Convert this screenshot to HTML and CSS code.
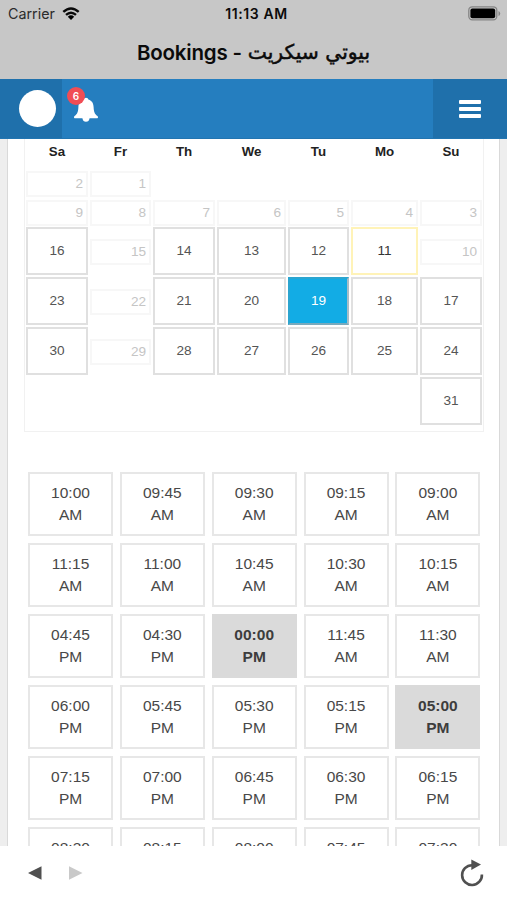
FILE: index.html
```html
<!DOCTYPE html>
<html lang="en">
<head>
<meta charset="utf-8">
<title>Bookings</title>
<link rel="stylesheet" href="styles.css">
</head>
<body>
<div class="app">
  <header class="top">
    <div class="status">
      <span class="carrier">Carrier
        <svg width="18" height="14" viewBox="0 0 18 14"><path d="M1.3 4.9Q9-2 16.7 4.9M4 7.9Q9 3.5 14 7.9" fill="none" stroke="#090909" stroke-width="2.4"/><path d="M5.8 9.7Q9 7 12.2 9.7L9 13Z"/></svg>
      </span>
      <span class="clock">11:13 AM</span>
      <svg class="battery" width="33" height="15" viewBox="0 0 33 15"><rect x=".8" y=".8" width="28" height="13" rx="3.5" fill="none" stroke="#858585" stroke-width="1.3"/><rect x="2.4" y="2.4" width="24.8" height="9.8" rx="2"/><path d="M30.5 5v5q1.7-.5 1.7-2.5T30.5 5" fill="#858585"/></svg>
    </div>
    <h1 class="title"><span>Bookings -</span><span class="salon" lang="ar" dir="rtl">بيوتي سيكريت</span></h1>
  </header>
  <nav class="bar">
    <div class="profile"><span class="avatar"></span></div>
    <div class="alerts">
      <svg width="24" height="26" viewBox="0 0 24 26"><path d="M9.6 2.5Q9.8.7 12 .7t2.4 1.8c3.7 1.1 5 3.9 5.2 7.4.2 4.4.8 6.9 3.8 9.1.9.8.8 2.2-.5 2.2h-7.3q-.6 3.5-3.6 3.5T8.4 21.2H1.1C-.2 21.2-.3 19.8.6 19c3-2.2 3.6-4.7 3.8-9.1.2-3.5 1.5-6.3 5.2-7.4Z" fill="#fff"/></svg>
      <span class="badge">6</span>
    </div>
    <div class="menu"><i></i><i></i><i></i></div>
  </nav>
  <main class="view">
    <div class="card">
      <section class="calendar">
        <b>Sa</b><b>Fr</b><b>Th</b><b>We</b><b>Tu</b><b>Mo</b><b>Su</b>
        <span class="off">2</span><span class="off">1</span><i></i><i></i><i></i><i></i><i></i>
        <span class="off">9</span><span class="off">8</span><span class="off">7</span><span class="off">6</span><span class="off">5</span><span class="off">4</span><span class="off">3</span>
        <span class="day">16</span><span class="off">15</span><span class="day">14</span><span class="day">13</span><span class="day">12</span><span class="day today">11</span><span class="off">10</span>
        <span class="day">23</span><span class="off">22</span><span class="day">21</span><span class="day">20</span><span class="day picked">19</span><span class="day">18</span><span class="day">17</span>
        <span class="day">30</span><span class="off">29</span><span class="day">28</span><span class="day">27</span><span class="day">26</span><span class="day">25</span><span class="day">24</span>
        <i></i><i></i><i></i><i></i><i></i><i></i><span class="day">31</span>
      </section>
      <section class="slots">
        <div>10:00<br>AM</div><div>09:45<br>AM</div><div>09:30<br>AM</div><div>09:15<br>AM</div><div>09:00<br>AM</div>
        <div>11:15<br>AM</div><div>11:00<br>AM</div><div>10:45<br>AM</div><div>10:30<br>AM</div><div>10:15<br>AM</div>
        <div>04:45<br>PM</div><div>04:30<br>PM</div><div class="taken">00:00<br>PM</div><div>11:45<br>AM</div><div>11:30<br>AM</div>
        <div>06:00<br>PM</div><div>05:45<br>PM</div><div>05:30<br>PM</div><div>05:15<br>PM</div><div class="taken">05:00<br>PM</div>
        <div>07:15<br>PM</div><div>07:00<br>PM</div><div>06:45<br>PM</div><div>06:30<br>PM</div><div>06:15<br>PM</div>
        <div>08:30</div><div>08:15</div><div>08:00</div><div>07:45</div><div>07:30</div>
      </section>
    </div>
  </main>
  <footer class="tools">
    <svg width="14" height="14" viewBox="0 0 14 14"><path d="M0 7 13.5.3v13.4Z" fill="#505050"/></svg>
    <svg class="next" width="14" height="14" viewBox="0 0 14 14"><path d="M13.5 7 0 .3v13.4Z" fill="#c9c9c9"/></svg>
    <svg class="reload" width="24" height="28" viewBox="0 0 24 28"><path d="M12 6.2A9.9 9.9 0 1 0 21.9 15.5" fill="none" stroke="#505050" stroke-width="2.6"/><path d="M11.3.5 21 5.6 11.3 11Z" fill="#505050"/></svg>
  </footer>
</div>
</body>
</html>
```
FILE: styles.css
```css
* { box-sizing: border-box; }
body { margin: 0; font-family: "Liberation Sans", Arial, sans-serif; background: #fff; }
svg { display: block; flex: none; }
.app { width: 507px; height: 900px; display: flex; flex-direction: column; overflow: hidden; }
.top { height: 79px; flex: none; background: #c7c7c7; color: #0b0b0b; }
.status { height: 27px; display: grid; grid-template-columns: 1fr auto 1fr; align-items: center; padding: 0 6px 0 8px; font: 14.3px Inter, sans-serif; }
.carrier { display: flex; align-items: center; gap: 7px; color: #2b2b2b; }
.clock { font-weight: 600; font-size: 14px; letter-spacing: .6px; padding-left: 4px; }
.battery { justify-self: end; }
.title { margin: 0; height: 50px; display: flex; align-items: center; justify-content: center; gap: 6px; font: 600 20.5px Inter, sans-serif; letter-spacing: -.2px; }
.salon { font: 400 20.3px "DejaVu Sans", sans-serif; letter-spacing: 0; -webkit-text-stroke: .5px #0b0b0b; }
.bar { height: 60px; flex: none; display: flex; align-items: center; background: #257ebf; border-bottom: 1px solid #2275b1; }
.profile { width: 62px; height: 59px; display: flex; align-items: center; padding-left: 19px; background: #1f70ab; }
.avatar { width: 37px; height: 37px; border-radius: 50%; background: #fff; }
.alerts { position: relative; margin: 2px 0 0 12px; }
.badge { position: absolute; left: -7px; top: -10px; width: 18px; height: 18px; border-radius: 50%; background: #f14d55; color: #fff; font: 600 10px/18px Inter, sans-serif; text-align: center; }
.menu { width: 74px; height: 59px; margin-left: auto; padding-left: 26px; display: flex; flex-direction: column; justify-content: center; gap: 3px; background: #1f70ab; }
.menu i { width: 22px; height: 4px; border-radius: 1px; background: #fff; }
.view { flex: 1; min-height: 0; overflow: hidden; padding: 0 7px; background: #eee; }
.card { height: 760px; padding: 0 16px; background: #fff; border: solid #d9d9d9; border-width: 0 1px; }
.calendar { width: 460px; height: 293px; padding: 0 0 0 1px; border: 1px solid #f1f1f1; border-top: 0; display: grid; grid-template-columns: 64px 63px 64px 71px 63px 69px 64px; grid-template-rows: 31px 28px 29px 50px 50px 50px 49px; }
.calendar b { text-align: center; font-size: 13.3px; line-height: 26px; color: #222; padding-right: 2px; }
.calendar span { width: calc(100% - 2px); border: 2px solid #e0e0e0; color: #555; font-size: 13.6px; }
.calendar span:nth-child(7n) { width: 62px; }
.calendar .off { height: 26px; align-self: center; text-align: right; padding-right: 3px; line-height: 22px; border-color: #f7f7f7; color: #c5c5c5; }
.calendar .day { height: 48px; line-height: 44px; text-align: center; }
.calendar .today { border-color: #fff3b8; color: #333; }
.calendar .picked { background: #12ace5; border-color: #2ba5d0 #a9bdc6 #79aabd #2ba5d0; color: #fff; }
.slots { margin: 40px 0 0 4px; display: grid; grid-template-columns: repeat(5, 85px); grid-auto-rows: 64px; gap: 7px 6.85px; }
.slots div { border: 2px solid #e7e7e7; padding-top: 8px; text-align: center; font-size: 15.5px; line-height: 22px; color: #484848; }
.slots .taken { background: #dadada; border-color: #dadada; color: #3d3d3d; font-weight: 700; }
.tools { height: 54px; flex: none; display: flex; align-items: center; padding: 0 23px 0 28px; background: #fff; }
.next { margin-left: 27px; }
.reload { margin-left: auto; }
```
